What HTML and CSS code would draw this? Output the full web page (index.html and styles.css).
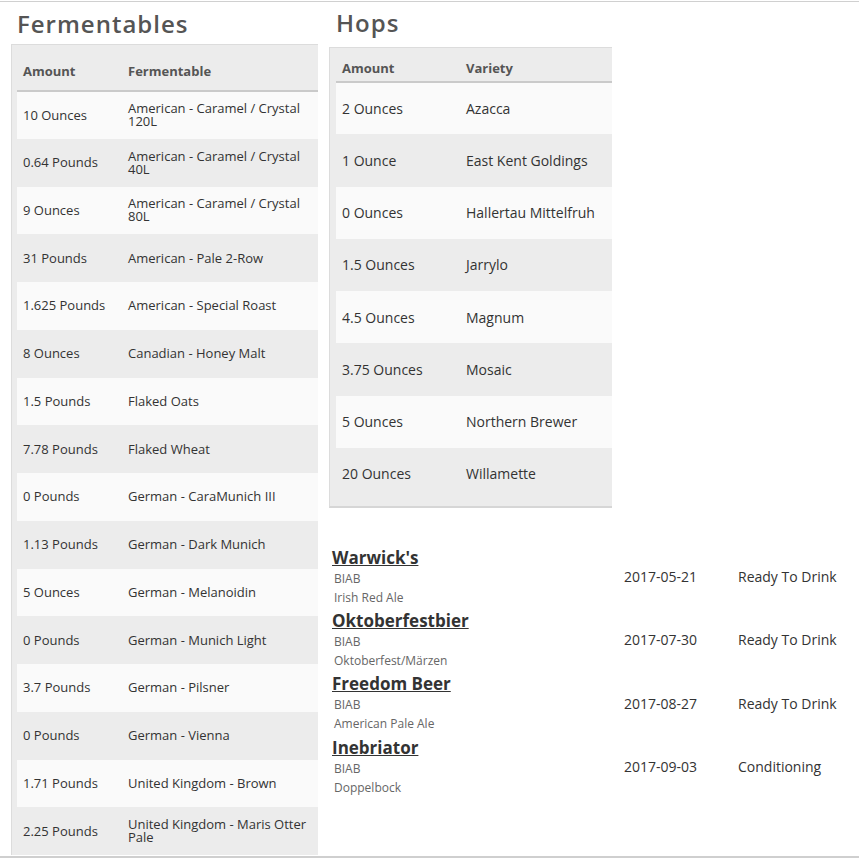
FILE: index.html
```html
<!DOCTYPE html>
<html>
<head>
<meta charset="utf-8">
<link rel="stylesheet" href="styles.css">
</head>
<body>
<div class="page">
  <section class="col col-left">
    <h2 class="title title-ferm">Fermentables</h2>
    <div class="card card-ferm">
      <table class="grid grid-ferm">
        <thead>
          <tr><th class="c-amt">Amount</th><th>Fermentable</th></tr>
        </thead>
        <tbody>
          <tr><td>10 Ounces</td><td>American - Caramel / Crystal 120L</td></tr>
          <tr><td>0.64 Pounds</td><td>American - Caramel / Crystal 40L</td></tr>
          <tr><td>9 Ounces</td><td>American - Caramel / Crystal 80L</td></tr>
          <tr><td>31 Pounds</td><td>American - Pale 2-Row</td></tr>
          <tr><td>1.625 Pounds</td><td>American - Special Roast</td></tr>
          <tr><td>8 Ounces</td><td>Canadian - Honey Malt</td></tr>
          <tr><td>1.5 Pounds</td><td>Flaked Oats</td></tr>
          <tr><td>7.78 Pounds</td><td>Flaked Wheat</td></tr>
          <tr><td>0 Pounds</td><td>German - CaraMunich III</td></tr>
          <tr><td>1.13 Pounds</td><td>German - Dark Munich</td></tr>
          <tr><td>5 Ounces</td><td>German - Melanoidin</td></tr>
          <tr><td>0 Pounds</td><td>German - Munich Light</td></tr>
          <tr><td>3.7 Pounds</td><td>German - Pilsner</td></tr>
          <tr><td>0 Pounds</td><td>German - Vienna</td></tr>
          <tr><td>1.71 Pounds</td><td>United Kingdom - Brown</td></tr>
          <tr><td>2.25 Pounds</td><td>United Kingdom - Maris Otter Pale</td></tr>
        </tbody>
      </table>
    </div>
  </section>
  <section class="col col-right">
    <h2 class="title title-hops">Hops</h2>
    <div class="card card-hops">
      <table class="grid grid-hops">
        <thead>
          <tr><th class="c-amt">Amount</th><th>Variety</th></tr>
        </thead>
        <tbody>
          <tr><td>2 Ounces</td><td>Azacca</td></tr>
          <tr><td>1 Ounce</td><td>East Kent Goldings</td></tr>
          <tr><td>0 Ounces</td><td>Hallertau Mittelfruh</td></tr>
          <tr><td>1.5 Ounces</td><td>Jarrylo</td></tr>
          <tr><td>4.5 Ounces</td><td>Magnum</td></tr>
          <tr><td>3.75 Ounces</td><td>Mosaic</td></tr>
          <tr><td>5 Ounces</td><td>Northern Brewer</td></tr>
          <tr><td>20 Ounces</td><td>Willamette</td></tr>
        </tbody>
      </table>
    </div>
    <table class="brews">
      <tbody>
        <tr>
          <td class="b-info"><a class="b-name" href="#">Warwick's</a><div class="b-sub">BIAB</div><div class="b-sub">Irish Red Ale</div></td>
          <td class="b-date">2017-05-21</td>
          <td class="b-status">Ready To Drink</td>
        </tr>
        <tr>
          <td class="b-info"><a class="b-name" href="#">Oktoberfestbier</a><div class="b-sub">BIAB</div><div class="b-sub">Oktoberfest/Märzen</div></td>
          <td class="b-date">2017-07-30</td>
          <td class="b-status">Ready To Drink</td>
        </tr>
        <tr>
          <td class="b-info"><a class="b-name" href="#">Freedom Beer</a><div class="b-sub">BIAB</div><div class="b-sub">American Pale Ale</div></td>
          <td class="b-date">2017-08-27</td>
          <td class="b-status">Ready To Drink</td>
        </tr>
        <tr>
          <td class="b-info"><a class="b-name" href="#">Inebriator</a><div class="b-sub">BIAB</div><div class="b-sub">Doppelbock</div></td>
          <td class="b-date">2017-09-03</td>
          <td class="b-status">Conditioning</td>
        </tr>
      </tbody>
    </table>
  </section>
</div>
</body>
</html>
```

FILE: styles.css
```css
html, body {
  margin: 0;
  padding: 0;
  background: #fff;
}
body {
  font-family: "Open Sans", "Liberation Sans", sans-serif;
  color: #333;
  overflow: hidden;
}
.page {
  margin-top: 1px;
  height: 854px;
  border-top: 1px solid #d0d0d0;
  border-bottom: 2px solid #cfcfcf;
  display: flex;
  align-items: flex-start;
  padding-left: 11px;
  gap: 11px;
  overflow: hidden;
}
.col-left {
  width: 307px;
  flex: none;
}
.col-right {
  flex: 1;
}
.title {
  margin: 0;
  font-weight: 600;
  font-size: 24px;
  letter-spacing: 1px;
  color: #555;
  line-height: 32px;
}
.title-ferm {
  padding: 6px 0 4px 6px;
}
.title-hops {
  padding: 5px 0 8px 7px;
}
.card {
  background: #ececec;
  border: 1px solid #dcdcdc;
  border-right: none;
  border-bottom-width: 2px;
  border-bottom-color: #d6d6d6;
}
.card-ferm {
  padding: 5px 0 0 5px;
  border-bottom: none;
}
.card-hops {
  width: 276px;
  padding: 5px 0 6px 6px;
}
.grid {
  width: 100%;
  border-collapse: collapse;
  font-size: 13px;
}
.grid th {
  text-align: left;
  font-weight: 700;
  color: #555;
  border-bottom: 2px solid #cacaca;
  padding: 0 6px;
}
.grid td {
  padding: 0 6px;
  vertical-align: middle;
  line-height: 13px;
}
.grid tbody tr:nth-child(odd) td {
  background: #fafafa;
}
.grid tbody tr:nth-child(even) td {
  background: #ececec;
}
.grid-ferm th {
  height: 38px;
  padding-top: 2px;
}
.grid-ferm td {
  height: 47.75px;
  box-sizing: border-box;
}
.grid-ferm .c-amt {
  width: 93px;
}
.grid-hops th {
  height: 27px;
  padding-top: 1px;
}
.grid-hops td {
  height: 52.25px;
  box-sizing: border-box;
  font-size: 14px;
}
.grid-hops .c-amt {
  width: 112px;
}
.brews {
  margin-top: 37px;
  margin-left: 3px;
  border-collapse: collapse;
  font-size: 14px;
}
.brews td {
  padding: 0;
  vertical-align: middle;
}
.b-info {
  width: 292px;
  height: 63.3px;
}
.b-name {
  display: block;
  font-size: 17px;
  font-weight: 700;
  color: #333;
  text-decoration: underline;
  line-height: 22px;
}
.b-sub {
  font-size: 12px;
  color: #666;
  line-height: 19px;
  padding-left: 2px;
}
.b-date {
  width: 114px;
}
.b-status {
  white-space: nowrap;
}
```
